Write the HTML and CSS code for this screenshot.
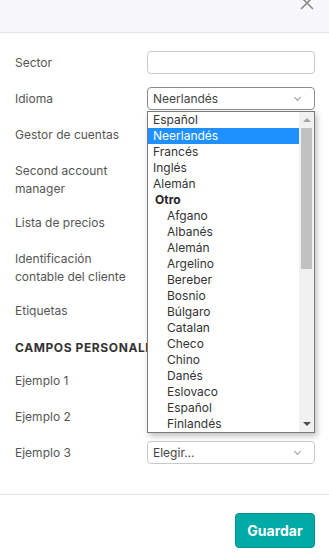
FILE: index.html
```html
<!DOCTYPE html>
<html lang="es">
<head>
    <meta charset="UTF-8">
    <meta name="viewport" content="width=device-width, initial-scale=1.0">
    <title>Editar cliente</title>
    <link rel="stylesheet" href="styles.css">
</head>
<body>
    <div class="modal">
        <div class="modal-header">
            <svg class="close" width="16" height="16" viewBox="0 0 16 16">
                <path d="M2 2 L14 14 M14 2 L2 14" stroke="#8a8a8a" stroke-width="1.6" fill="none"/>
            </svg>
        </div>

        <div class="modal-body">
            <div class="row">
                <label>Sector</label>
                <div class="control"><input type="text" class="field"></div>
            </div>

            <div class="row">
                <label>Idioma</label>
                <div class="control">
                    <div class="field select focused">Neerlandés<span class="chevron"></span></div>
                    <div class="dropdown">
                        <ul class="options">
                            <li>Español</li>
                            <li class="selected">Neerlandés</li>
                            <li>Francés</li>
                            <li>Inglés</li>
                            <li>Alemán</li>
                            <li class="group">Otro</li>
                            <li class="sub">Afgano</li>
                            <li class="sub">Albanés</li>
                            <li class="sub">Alemán</li>
                            <li class="sub">Argelino</li>
                            <li class="sub">Bereber</li>
                            <li class="sub">Bosnio</li>
                            <li class="sub">Búlgaro</li>
                            <li class="sub">Catalan</li>
                            <li class="sub">Checo</li>
                            <li class="sub">Chino</li>
                            <li class="sub">Danés</li>
                            <li class="sub">Eslovaco</li>
                            <li class="sub">Español</li>
                            <li class="sub">Finlandés</li>
                        </ul>
                        <div class="scrollbar">
                            <span class="arrow up"></span>
                            <div class="track"><div class="thumb"></div></div>
                            <span class="arrow down"></span>
                        </div>
                    </div>
                </div>
            </div>

            <div class="row">
                <label>Gestor de cuentas</label>
                <div class="control"><div class="field select"><span class="chevron"></span></div></div>
            </div>

            <div class="row">
                <label>Second account manager</label>
                <div class="control"><div class="field select"><span class="chevron"></span></div></div>
            </div>

            <div class="row">
                <label>Lista de precios</label>
                <div class="control"><div class="field select"><span class="chevron"></span></div></div>
            </div>

            <div class="row">
                <label>Identificación contable del cliente</label>
                <div class="control"><input type="text" class="field"></div>
            </div>

            <div class="row">
                <label>Etiquetas</label>
                <div class="control"><input type="text" class="field"></div>
            </div>

            <h3 class="section-title">Campos personalizados</h3>

            <div class="row">
                <label>Ejemplo 1</label>
                <div class="control"><input type="text" class="field"></div>
            </div>

            <div class="row">
                <label>Ejemplo 2</label>
                <div class="control"><input type="text" class="field"></div>
            </div>

            <div class="row">
                <label>Ejemplo 3</label>
                <div class="control"><div class="field select">Elegir...<span class="chevron"></span></div></div>
            </div>
        </div>

        <div class="modal-footer">
            <button class="btn-save">Guardar</button>
        </div>
    </div>
</body>
</html>
```

FILE: styles.css
```css
body {
    margin: 0;
    font-family: Inter, "Noto Sans", sans-serif;
    font-size: 12px;
    color: #555;
    background: #fff;
}

.modal {
    width: 329px;
    overflow: hidden;
}

.modal-header {
    position: relative;
    height: 32px;
    background: #f7f7f9;
    border-bottom: 1px solid #e4e4e6;
}

.close {
    position: absolute;
    top: -5px;
    right: 14px;
}

.modal-body {
    padding: 18px 14px 30px 15px;
}

.row {
    display: grid;
    grid-template-columns: 132px 1fr;
    margin-bottom: 13px;
}

.row:last-child {
    margin-bottom: 0;
}

label {
    padding-top: 3px;
    line-height: 18px;
    padding-right: 10px;
}

.control {
    position: relative;
}

.field {
    box-sizing: border-box;
    display: block;
    width: 100%;
    height: 23px;
    margin: 0;
    padding: 0 5px;
    border: 1px solid #c9c9c9;
    border-radius: 4px;
    background: #fff;
    font-family: inherit;
    font-size: 12px;
    line-height: 21px;
    color: #444;
}

.select {
    position: relative;
}

.focused {
    border-color: #8c8c8c;
}

.chevron {
    position: absolute;
    right: 14px;
    top: 7px;
    width: 4px;
    height: 4px;
    border-right: 1.5px solid #999;
    border-bottom: 1.5px solid #999;
    transform: rotate(45deg);
}

.dropdown {
    position: absolute;
    top: 24px;
    left: 0;
    right: 0;
    z-index: 5;
    display: flex;
    border: 1px solid #7a7a7a;
    background: #fff;
    box-shadow: 2px 3px 6px rgba(0, 0, 0, 0.25);
}

.options {
    flex: 1;
    margin: 0;
    padding: 0;
    list-style: none;
    font-size: 12px;
    color: #333;
}

.options li {
    height: 16px;
    line-height: 16px;
    padding-left: 5px;
    white-space: nowrap;
}

.options .selected {
    background: #1e90ff;
    color: #fff;
}

.options .group {
    padding-left: 7px;
    font-weight: bold;
    color: #222;
}

.options .sub {
    padding-left: 19px;
}

.scrollbar {
    width: 15px;
    background: #f1f1f1;
    display: flex;
    flex-direction: column;
    align-items: center;
}

.arrow {
    width: 0;
    height: 0;
    border-left: 4px solid transparent;
    border-right: 4px solid transparent;
}

.arrow.up {
    margin: 6px 0 5px;
    border-bottom: 4px solid #a3a3a3;
}

.arrow.down {
    margin: 5px 0 6px;
    border-top: 4px solid #505050;
}

.track {
    flex: 1;
    width: 100%;
}

.thumb {
    width: 11px;
    height: 141px;
    margin: 1px auto 0;
    background: #c1c1c1;
}

.section-title {
    margin: 17px 0 12px;
    font-size: 12px;
    line-height: 18px;
    font-weight: bold;
    letter-spacing: 0.6px;
    text-transform: uppercase;
    color: #333;
}

.modal-footer {
    border-top: 1px solid #e4e4e4;
    padding: 18px 14px;
    display: flex;
    justify-content: flex-end;
}

.btn-save {
    width: 80px;
    height: 35px;
    border: 1px solid #00918d;
    border-radius: 4px;
    background: #00aaa6;
    color: #fff;
    font-family: inherit;
    font-size: 14px;
    font-weight: bold;
    cursor: pointer;
}
```
